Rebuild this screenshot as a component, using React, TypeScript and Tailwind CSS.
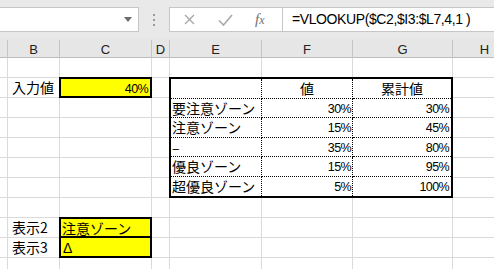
import { Fragment } from "react";

const colLetters = ["", "B", "C", "D", "E", "F", "G", "H"];
const colStart = [
  "col-start-1",
  "col-start-2",
  "col-start-3",
  "col-start-4",
  "col-start-5",
  "col-start-6",
  "col-start-7",
  "col-start-8",
];
const rowStart = [
  "row-start-1",
  "row-start-2",
  "row-start-3",
  "row-start-4",
  "row-start-5",
  "row-start-6",
  "row-start-7",
  "row-start-8",
  "row-start-9",
  "row-start-10",
  "row-start-11",
];

const cols = "grid-cols-[8px_52px_92px_18px_92px_91px_100px_64px]";
const jp = "font-['Noto_Sans_CJK_JP',sans-serif] text-[14px] leading-[19px]";
const num =
  "font-['Liberation_Sans',Arial,sans-serif] text-[12.5px] tracking-[-0.6px] leading-[19px] pt-[1px]";

const rows = [
  { name: "要注意ゾーン", value: "30%", total: "30%" },
  { name: "注意ゾーン", value: "15%", total: "45%" },
  { name: "–", value: "35%", total: "80%" },
  { name: "優良ゾーン", value: "15%", total: "95%" },
  { name: "超優良ゾーン", value: "5%", total: "100%" },
];

function TopBar() {
  return (
    <div className="flex h-[38px] items-start bg-[#e9e9e9] pt-[7px]">
      <div className="flex h-[25px] w-[139px] items-center justify-end border border-l-0 border-[#c6c6c6] bg-white pr-[6px]">
        <svg width="8" height="5" viewBox="0 0 8 5">
          <path d="M0 0h8L4 5z" fill="#6b6b6b" />
        </svg>
      </div>
      <div className="flex w-[30px] flex-col items-center gap-[3px] pt-[7px]">
        <span className="h-[2px] w-[2px] bg-[#9a9a9a]" />
        <span className="h-[2px] w-[2px] bg-[#9a9a9a]" />
        <span className="h-[2px] w-[2px] bg-[#9a9a9a]" />
      </div>
      <div className="flex h-[25px] flex-1 items-center border border-r-0 border-[#c6c6c6] bg-white">
        <div className="flex w-[112px] items-center">
          <svg className="ml-[14px]" width="11" height="11" viewBox="0 0 11 11">
            <path d="M1 1l9 9M10 1l-9 9" stroke="#a8a8a8" strokeWidth="1.4" />
          </svg>
          <svg className="ml-[23px]" width="15" height="12" viewBox="0 0 15 12">
            <path d="M1 6.5l4.5 4.5L14 1" stroke="#a8a8a8" strokeWidth="1.6" fill="none" />
          </svg>
          <span className="ml-[22px] font-['Liberation_Serif',serif] text-[15px] italic text-[#6f6f6f]">
            f<span className="text-[12px]">x</span>
          </span>
        </div>
        <div className="flex h-full flex-1 items-center border-l border-[#c6c6c6] pl-[9px] font-['Liberation_Sans',Arial,sans-serif] text-[14px] tracking-[-0.4px] text-black">
          =VLOOKUP($C2,$I3:$L7,4,1 )
        </div>
      </div>
    </div>
  );
}

function ColumnHeader() {
  return (
    <div className={`grid ${cols} h-[20px] border-b border-[#bcbcbc] bg-[#e6e6e6]`}>
      {colLetters.map((l, i) => (
        <div
          key={i}
          className="mt-[2px] flex items-center justify-center border-r border-[#c4c4c4] font-['Liberation_Sans',Arial,sans-serif] text-[13px] text-[#222]"
        >
          {l}
        </div>
      ))}
    </div>
  );
}

function Sheet() {
  return (
    <div className={`grid ${cols} auto-rows-[20px]`}>
      {rowStart.map((r) =>
        colStart.map((c) => (
          <div key={r + c} className={`${r} ${c} border-r border-b border-[#dadada] bg-white`} />
        ))
      )}

      <div className={`row-start-2 col-start-2 pl-[4px] ${jp}`}>入力値</div>
      <div
        className={`row-start-2 col-start-3 -ml-px -mt-px border-2 border-black bg-[#ffff00] pr-[2px] text-right ${num}`}
      >
        40%
      </div>

      <div className="row-start-2 row-span-6 col-start-5 col-span-3 -ml-px -mt-px grid grid-cols-[91px_91px_1fr] grid-rows-6 border-2 border-black bg-white">
        <div className="border-r border-b border-dotted border-black" />
        <div className={`border-r border-b border-dotted border-black text-center ${jp}`}>値</div>
        <div className={`border-b border-dotted border-black text-center ${jp}`}>累計値</div>
        {rows.map((row, i) => (
          <Fragment key={row.name}>
            <div
              className={`overflow-hidden whitespace-nowrap border-r border-dotted border-black pl-[1px] ${
                i < rows.length - 1 ? "border-b" : ""
              } ${jp}`}
            >
              {row.name}
            </div>
            <div
              className={`border-r border-dotted border-black pr-[1px] text-right ${
                i < rows.length - 1 ? "border-b" : ""
              } ${num}`}
            >
              {row.value}
            </div>
            <div
              className={`border-dotted border-black pr-[2px] text-right ${
                i < rows.length - 1 ? "border-b" : ""
              } ${num}`}
            >
              {row.total}
            </div>
          </Fragment>
        ))}
      </div>

      <div className={`row-start-9 col-start-2 pl-[4px] ${jp}`}>表示2</div>
      <div className={`row-start-10 col-start-2 pl-[4px] ${jp}`}>表示3</div>
      <div className="row-start-9 row-span-2 col-start-3 -ml-px -mt-px grid grid-rows-2 border-2 border-black bg-[#ffff00]">
        <div className={`border-b-2 border-black pl-[1px] ${jp}`}>注意ゾーン</div>
        <div className="pl-[2px] font-['Liberation_Sans',Arial,sans-serif] text-[14px] leading-[19px] pt-[1px]">Δ</div>
      </div>
    </div>
  );
}

export default function App() {
  return (
    <div className="h-[269px] w-[494px] overflow-hidden bg-white">
      <TopBar />
      <ColumnHeader />
      <Sheet />
    </div>
  );
}
